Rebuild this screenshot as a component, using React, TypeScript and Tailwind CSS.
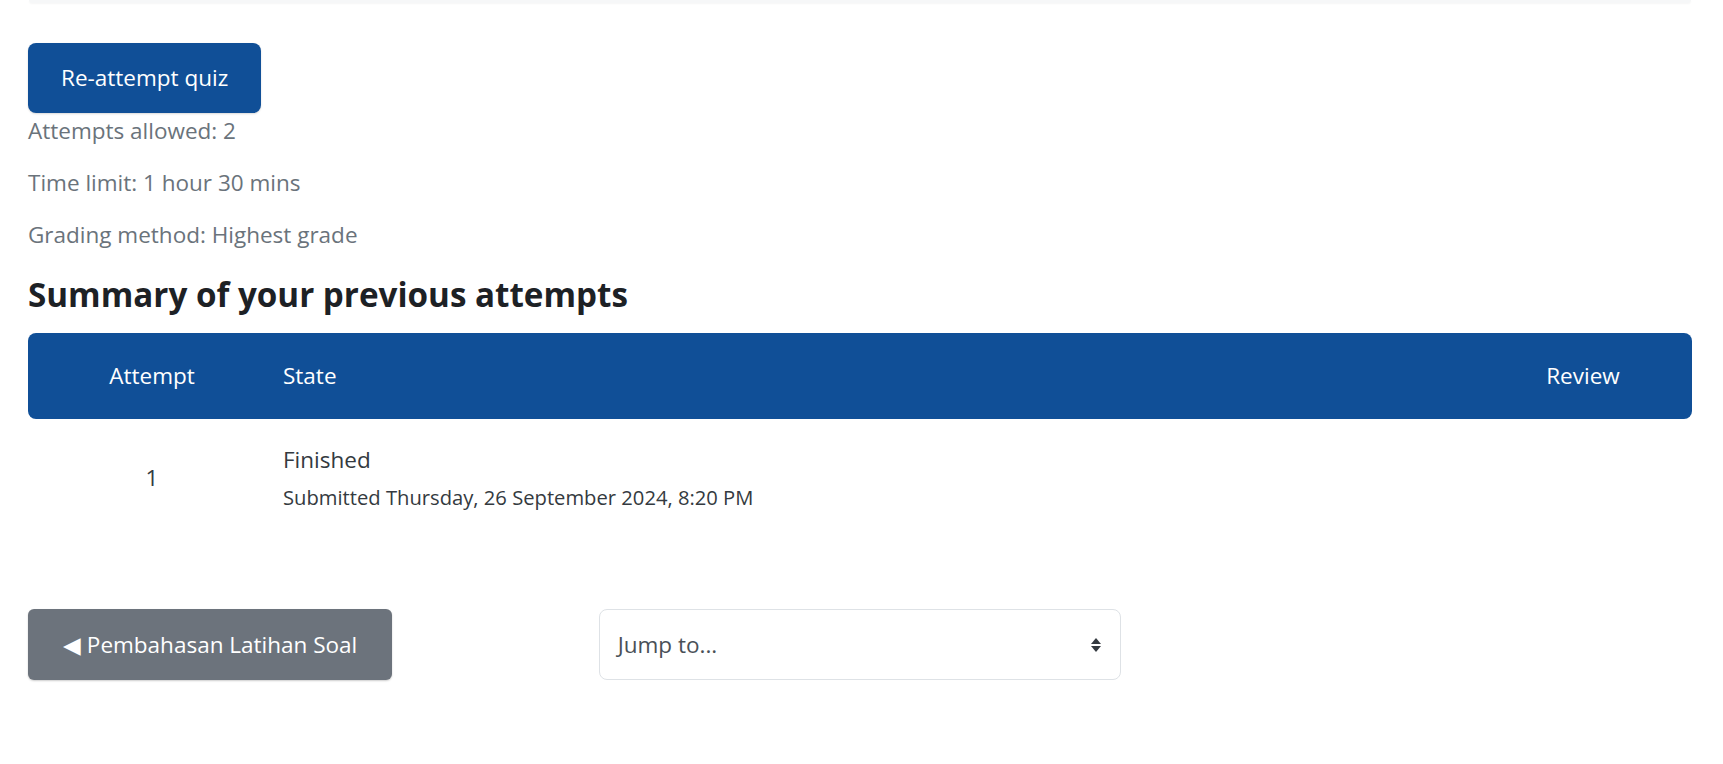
import React from "react";

const attempts = [
  {
    id: 1,
    state: "Finished",
    submitted: "Submitted Thursday, 26 September 2024, 8:20 PM",
  },
];

export default function App() {
  return (
    <div
      className="min-h-screen bg-white pl-[28px] pr-[31px]"
      style={{ fontFamily: '"Open Sans", "Noto Sans", sans-serif' }}
    >
      {/* Bottom edge of the card above */}
      <div className="h-[3px] mx-[1px] rounded-b-xl bg-[#f6f7f8] shadow-[0_1px_2px_rgba(0,0,0,0.04)]"></div>

      <div className="pt-[40px]">
        <button className="h-[70px] px-[33px] rounded-lg bg-[#104f97] text-white text-[22.5px] leading-[30px] shadow-[0_1px_2px_rgba(0,0,0,0.15)]">
          Re-attempt quiz
        </button>
      </div>

      {/* Quiz info */}
      <div className="mt-[3px] text-[22.5px] leading-[30px] text-[#6a737b]">
        <p className="mb-[22px]">Attempts allowed: 2</p>
        <p className="mb-[22px]">Time limit: 1 hour 30 mins</p>
        <p>Grading method: Highest grade</p>
      </div>

      <h3 className="mt-[26px] text-[33.2px] leading-[37px] font-bold text-[#1d2125]">
        Summary of your previous attempts
      </h3>

      {/* Attempts table */}
      <div className="mt-[20px] w-[1664px]">
        <div className="grid grid-cols-[248px_1fr_218px] h-[86px] items-center rounded-lg bg-[#104f97] text-white text-[22.5px] leading-[30px]">
          <div className="text-center">Attempt</div>
          <div className="pl-[7px]">State</div>
          <div className="text-center">Review</div>
        </div>
        {attempts.map((a) => (
          <div
            key={a.id}
            className="grid grid-cols-[248px_1fr_218px] items-center py-[26px] text-[#343a40]"
          >
            <div className="text-center text-[22.5px] leading-[30px]">{a.id}</div>
            <div className="pl-[7px]">
              <div className="text-[22.5px] leading-[30px]">{a.state}</div>
              <div className="mt-[9px] text-[20.2px] leading-[26px]">
                {a.submitted}
              </div>
            </div>
            <div></div>
          </div>
        ))}
      </div>

      {/* Activity navigation */}
      <div className="mt-[73px] grid grid-cols-3 w-[1664px]">
        <div>
          <button className="h-[71px] px-[35px] rounded-md bg-[#6c737c] text-white text-[22.5px] leading-[30px] shadow-[0_1px_2px_rgba(0,0,0,0.2)]">
            ◀ Pembahasan Latihan Soal
          </button>
        </div>
        <div className="px-[16px]">
          <div className="relative h-[71px] rounded-lg border border-[#dee2e6] bg-white flex items-center pl-[18px] text-[22.5px] leading-[30px] text-[#495057]">
            Jump to...
            <svg
              className="absolute right-[18px] top-1/2 -translate-y-1/2"
              width="12"
              height="16"
              viewBox="0 0 12 16"
            >
              <path d="M6 1 L11 7 L1 7 Z" fill="#343a40" />
              <path d="M6 15 L11 9 L1 9 Z" fill="#343a40" />
            </svg>
          </div>
        </div>
        <div></div>
      </div>
    </div>
  );
}
